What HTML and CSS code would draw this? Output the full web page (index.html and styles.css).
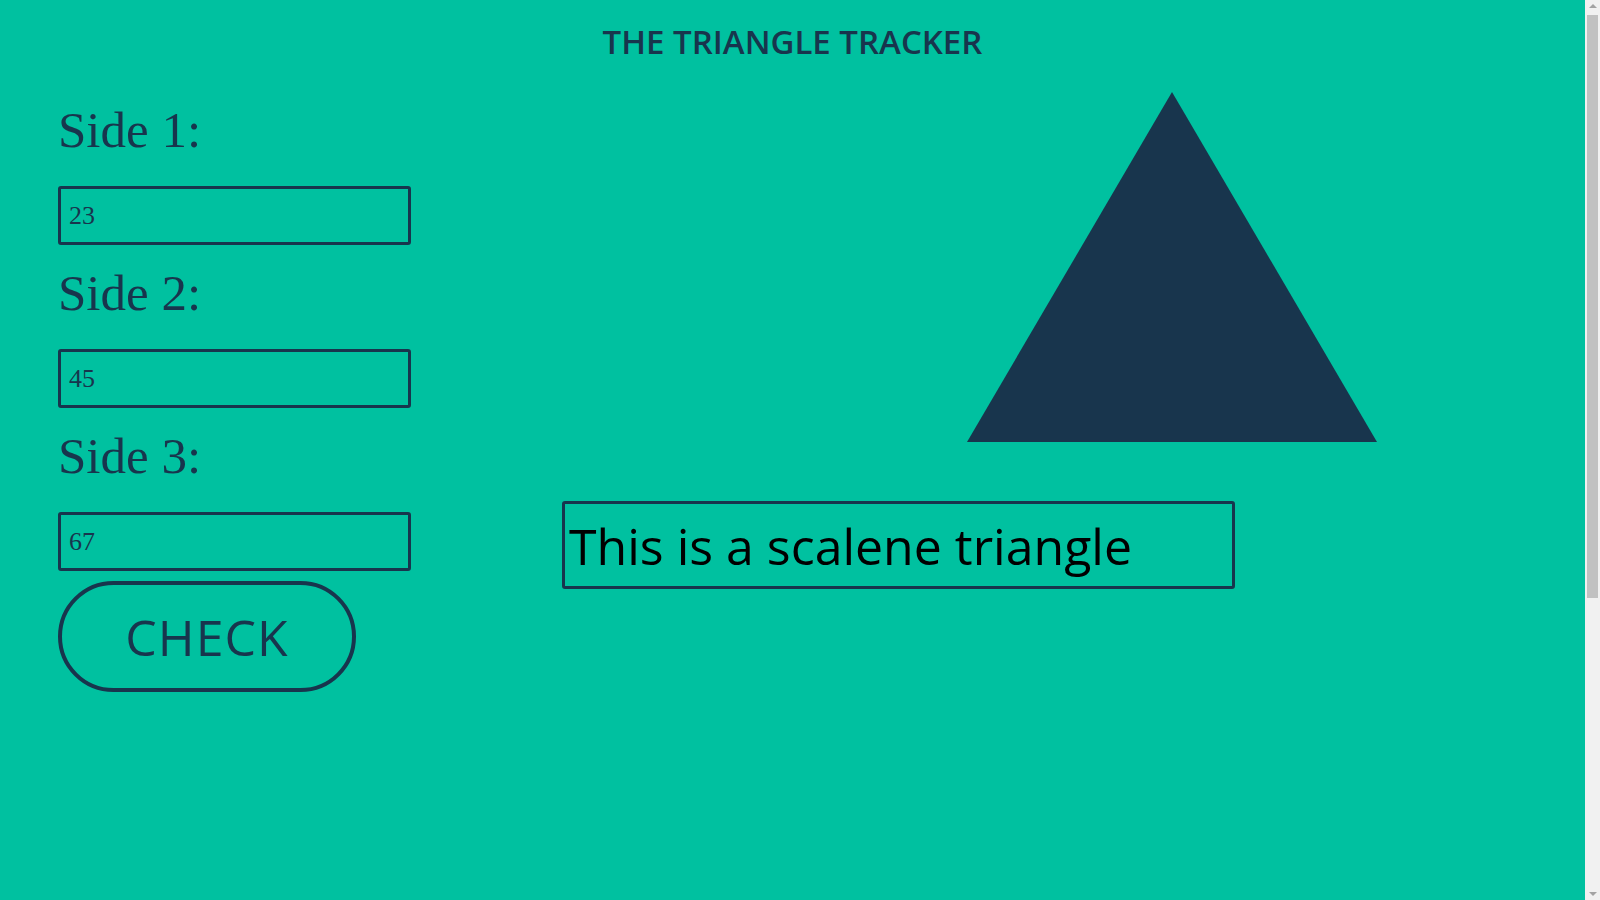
FILE: index.html
```html
<!DOCTYPE html>
<html lang="en">
<head>
<meta charset="utf-8">
<title>The Triangle Tracker</title>
<link rel="stylesheet" href="styles.css">
</head>
<body>
<header class="header">
  <h1 class="title">THE TRIANGLE TRACKER</h1>
</header>
<main class="layout">
  <form class="sides">
    <div class="field">
      <label class="side-label" for="s1">Side 1:</label>
      <input class="side-input" id="s1" type="text" value="23">
    </div>
    <div class="field">
      <label class="side-label" for="s2">Side 2:</label>
      <input class="side-input" id="s2" type="text" value="45">
    </div>
    <div class="field">
      <label class="side-label" for="s3">Side 3:</label>
      <input class="side-input" id="s3" type="text" value="67">
    </div>
    <button class="check" type="button">CHECK</button>
  </form>
  <section class="display">
    <div class="triangle"></div>
    <div class="result">This is a scalene triangle</div>
  </section>
</main>
<div class="scrollbar" aria-hidden="true">
  <span class="scroll-arrow up"></span>
  <span class="scroll-thumb"></span>
  <span class="scroll-arrow down"></span>
</div>
</body>
</html>
```
FILE: styles.css
```css
html, body {
  margin: 0;
  padding: 0;
}
body {
  background: #00c1a0;
  color: #18354d;
  font-family: "Liberation Serif", serif;
  min-height: 1340px;
  padding-right: 15px;
}
.header {
  padding-top: 22px;
  text-align: center;
}
.title {
  margin: 0;
  font-family: "Open Sans", sans-serif;
  font-weight: 600;
  font-size: 33px;
  line-height: 40px;
  color: #18354d;
}
.layout {
  display: grid;
  grid-template-columns: 504px 1fr;
  padding-left: 58px;
}
.sides {
  display: flex;
  flex-direction: column;
  padding-top: 20px;
}
.field {
  display: flex;
  flex-direction: column;
}
.side-label {
  font-family: "Liberation Serif", serif;
  font-size: 51px;
  line-height: 60px;
  padding-top: 18px;
  padding-bottom: 26px;
  color: #18354d;
}
.side-input {
  box-sizing: border-box;
  width: 353px;
  height: 59px;
  border: 3px solid #18354d;
  border-radius: 3px;
  background: transparent;
  padding: 0 8px;
  font-family: "Liberation Serif", serif;
  font-size: 26px;
  color: #18354d;
}
.check {
  box-sizing: border-box;
  margin-top: 10px;
  width: 298px;
  height: 111px;
  border: 4px solid #18354d;
  border-radius: 56px;
  background: transparent;
  font-family: "Open Sans", sans-serif;
  font-size: 50px;
  letter-spacing: 1px;
  color: #18354d;
  padding: 0;
}
.display {
  display: flex;
  flex-direction: column;
  align-items: flex-start;
}
.triangle {
  margin-top: 30px;
  margin-left: 405px;
  width: 0;
  height: 0;
  border-left: 205px solid transparent;
  border-right: 205px solid transparent;
  border-bottom: 350px solid #18354d;
}
.result {
  box-sizing: border-box;
  margin-top: 59px;
  width: 673px;
  height: 88px;
  border: 3px solid #18354d;
  border-radius: 3px;
  padding-left: 4px;
  padding-top: 2px;
  font-family: "Open Sans", sans-serif;
  font-size: 50px;
  line-height: 80px;
  color: #000;
}
.scrollbar {
  position: fixed;
  top: 0;
  right: 0;
  bottom: 0;
  width: 15px;
  background: #f1f1f1;
  display: flex;
  flex-direction: column;
  align-items: center;
}
.scroll-arrow {
  width: 0;
  height: 0;
  border-left: 4px solid transparent;
  border-right: 4px solid transparent;
}
.scroll-arrow.up {
  margin-top: 4px;
  border-bottom: 4px solid #a3a3a3;
}
.scroll-arrow.down {
  margin-top: auto;
  margin-bottom: 4px;
  border-top: 4px solid #a3a3a3;
}
.scroll-thumb {
  margin-top: 7px;
  width: 11px;
  height: 583px;
  background: #c1c1c1;
}
```
